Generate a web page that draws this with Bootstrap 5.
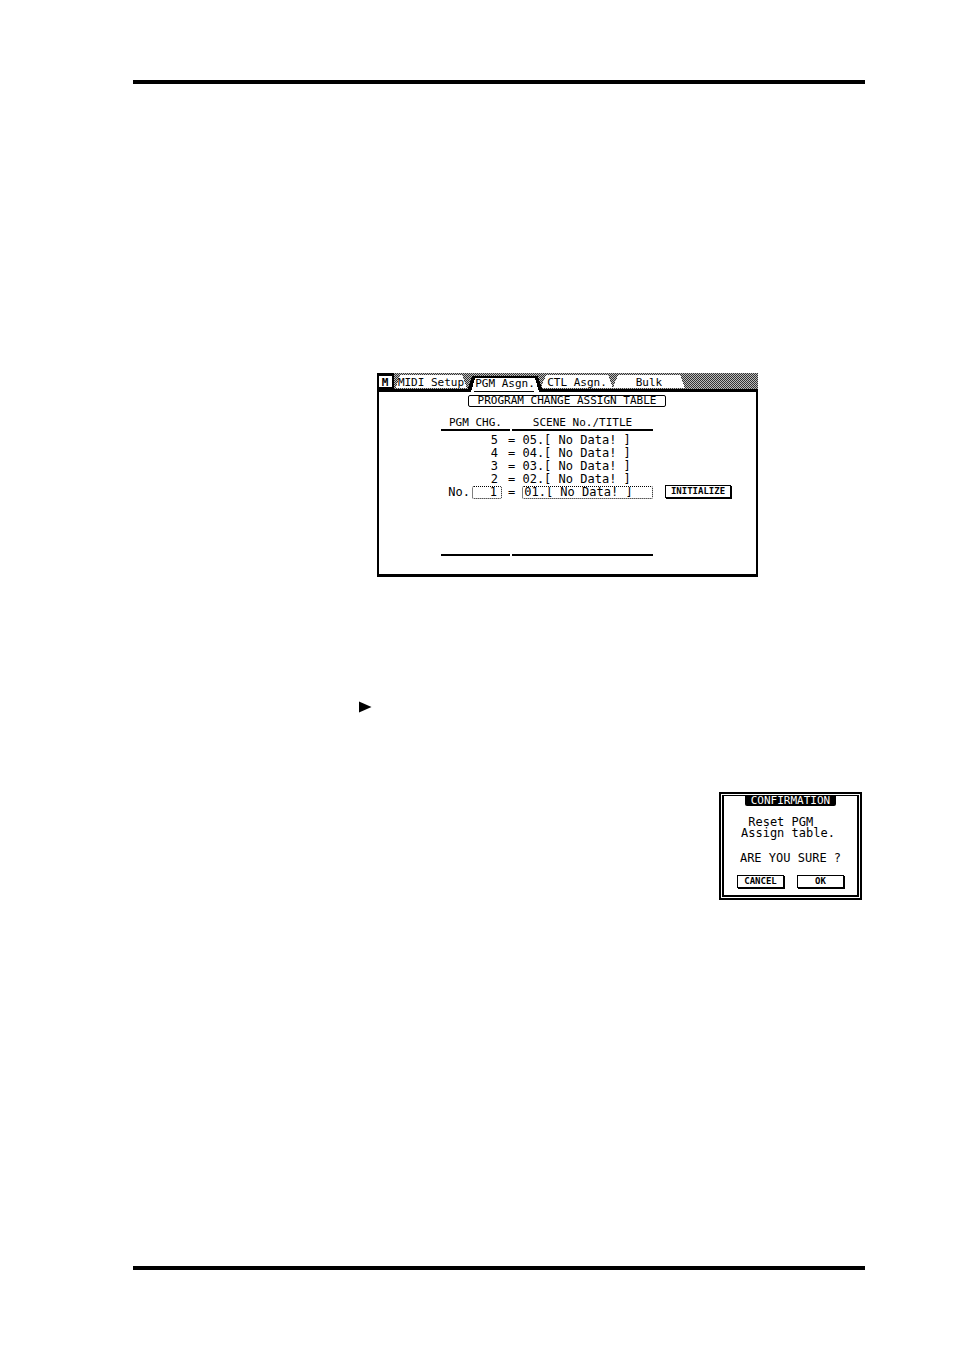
<!DOCTYPE html>
<html lang="en">
<head>
<meta charset="utf-8">
<meta name="viewport" content="width=device-width, initial-scale=1">
<title>Program Change Assign Table</title>
<link href="https://cdn.jsdelivr.net/npm/bootstrap@5.3.0/dist/css/bootstrap.min.css" rel="stylesheet">
<style>
  body { background: #fff; color: #000; font-family: "DejaVu Sans Mono", monospace; font-size: 12px; line-height: 13px; }
  .sheet { padding: 80px 89px 81px 133px; }
  .rule { height: 4px; background: #000; }
  .lcd { max-width: 381px; margin: 289px 0 0 244px; padding-bottom: 18px; border: solid #000; border-width: 0 2px 3px; }
  .tabs { height: 19px; margin: 0 -2px; }
  .tabs button, .key { border: 0; padding: 0; background: none; color: #000; white-space: pre; }
  .tabs button { font-size: 11px; line-height: 17px; z-index: 1; width: 72px; }
  .tabs .home { width: 16px; font-weight: bold; }
  .tabs .first { width: 76px; }
  .tabs .current { line-height: 22px; }
  .heading { border: 1px solid #000; border-radius: 2px; font-size: 11px; line-height: 10px; width: 198px; margin-top: 3px; margin-left: 89px; white-space: nowrap; }
  .assign { margin: 10px 0 0 60px; width: 216px; table-layout: fixed; border-collapse: separate; border-spacing: 2px 0; }
  .assign th { font-size: 11px; font-weight: normal; line-height: 12px; border-bottom: 2px solid #000; }
  .assign td, .assign th { padding: 0; white-space: pre; }
  .assign th:first-child { width: 69px; }
  .assign tbody tr:first-child td { padding-top: 3px; }
  .assign tbody td:first-child { padding-right: 12px; text-align: right; }
  .assign tbody td:last-child { text-indent: -4px; }
  .assign tbody tr:last-child td { text-indent: 0; }
  .assign tbody tr:last-child td:first-child { padding-right: 8px; }
  .scene-cell { margin-left: -4px; gap: 7px; }
  .num-cell { gap: 2px; }
  .assign tfoot td { height: 57px; border-bottom: 2px solid #000; }
  .field { border: 1px dotted #000; border-radius: 2px; background: none; color: #000; font: inherit; height: 13px; padding: 0; outline: 0; }
  .num { width: 30px; padding-right: 4px; text-align: right; }
  .scene { width: 131px; flex: none; padding-left: 1px; }
  .key { border: 1px solid #000; box-shadow: 1px 1px 0 #000; font-size: 9px; font-weight: bold; line-height: 11px; height: 13px; background: #fff; }
  .init { width: 66px; margin: 78px 0 0 10px; }
  .marker { width: 13px; height: 12px; margin: 124px 0 0 226px; }
  .confirm { width: 143px; height: 108px; margin: 79px 3px 0 0; border: 2px solid #000; padding: 1px; }
  .confirm-body { border: 2px solid #000; height: 102px; border-top-width: 1px; }
  .confirm h2 { background: #000; color: #fff; font-size: 11px; line-height: 10px; width: 91px; margin: 0 auto; border-radius: 0 0 2px 2px; white-space: nowrap; }
  .message { line-height: 11px; margin: 11px 0 0 17px; white-space: pre; }
  .ask { margin: 13px 0 0; }
  .keys { margin-top: 10px; gap: 13px; }
  .keys .key { width: 47px; }
</style>
<script src="https://cdn.jsdelivr.net/npm/bootstrap@5.3.0/dist/js/bootstrap.bundle.min.js"></script>
</head>
<body>
<main class="sheet min-vh-100 d-flex flex-column">
  <div class="rule"></div>
  <section class="lcd">
    <nav class="tabs d-flex position-relative">
      <svg class="position-absolute top-0 start-0" width="381" height="19" viewBox="0 0 381 19" shape-rendering="crispEdges" aria-hidden="true">
        <defs><pattern id="dots" width="2" height="2" patternUnits="userSpaceOnUse"><rect width="2" height="2" fill="#bbb"/><rect width="1" height="1" fill="#333"/><rect x="1" y="1" width="1" height="1" fill="#333"/></pattern></defs>
        <rect width="381" height="19" fill="url(#dots)"/>
        <path fill="#fff" d="M23 2H85L90 15H19ZM169 2H231L236 15H164ZM241 2H303L308 15H236Z"/>
        <path d="M0 16H91L95 3H161L165 16H381V19H0Z"/>
        <path fill="#fff" d="M98 5H158L162 19H94Z"/>
        <path d="M97 18H157V19H97Z"/>
        <path d="M0 0H17V16H0Z"/>
        <path fill="#fff" d="M2 3H15V14H2Z"/>
      </svg>
      <button class="home" type="button">M</button>
      <button class="first" type="button">MIDI Setup</button>
      <button class="current" type="button">PGM Asgn.</button>
      <button type="button">CTL Asgn.</button>
      <button type="button">Bulk</button>
    </nav>
    <h1 class="heading text-center mb-0">PROGRAM CHANGE ASSIGN TABLE</h1>
    <div class="d-flex align-items-start">
      <table class="assign">
        <thead><tr><th class="text-center">PGM CHG.</th><th class="text-center">SCENE No./TITLE</th></tr></thead>
        <tbody>
          <tr><td>5</td><td>= 05.[ No Data! ]</td></tr>
          <tr><td>4</td><td>= 04.[ No Data! ]</td></tr>
          <tr><td>3</td><td>= 03.[ No Data! ]</td></tr>
          <tr><td>2</td><td>= 02.[ No Data! ]</td></tr>
          <tr><td><div class="num-cell d-flex justify-content-end"><label for="num">No.</label><input class="field num" id="num" value="1"></div></td><td><div class="scene-cell d-flex"><label for="scene">=</label><input class="field scene" id="scene" value="01.[ No Data! ]"></div></td></tr>
        </tbody>
        <tfoot><tr><td></td><td></td></tr></tfoot>
      </table>
      <button class="key init" type="button">INITIALIZE</button>
    </div>
  </section>
  <svg class="marker" viewBox="0 0 13 12" aria-hidden="true"><path d="M0 0.5L12.5 6L0 11.5Z"/></svg>
  <section class="confirm align-self-end">
    <div class="confirm-body">
      <h2 class="text-center">CONFIRMATION</h2>
      <p class="message mb-0"> Reset PGM
Assign table.</p>
      <p class="ask text-center">ARE YOU SURE ?</p>
      <div class="keys d-flex justify-content-center"><button class="key" type="button">CANCEL</button><button class="key" type="button">OK</button></div>
    </div>
  </section>
  <div class="rule mt-auto"></div>
</main>
</body>
</html>
